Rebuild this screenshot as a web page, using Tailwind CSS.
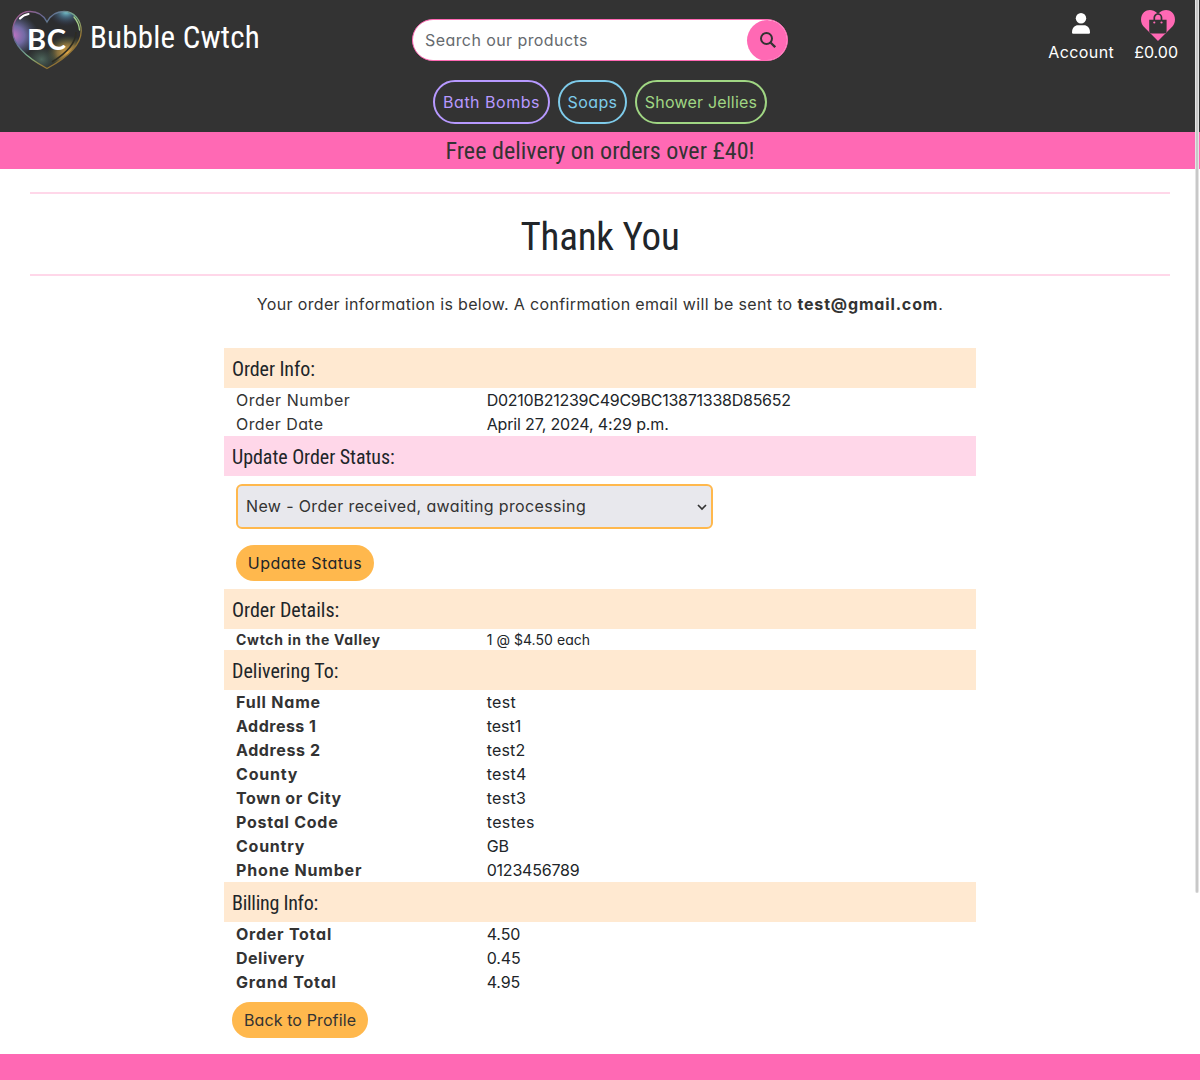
<!DOCTYPE html>
<html lang="en">
<head>
<meta charset="utf-8">
<title>Bubble Cwtch</title>
<script src="https://cdn.jsdelivr.net/npm/@tailwindcss/browser@4"></script>
</head>
<body class="relative h-[1080px] overflow-hidden bg-white font-['Inter',sans-serif] text-base leading-6 text-[#333] [font-feature-settings:'cv11']">
<header class="h-[132px] bg-[#333]">
  <div class="flex h-20 items-start">
    <div class="flex w-[412px] items-start pl-3 pt-[10px]">
      <svg class="h-[60px] w-[70px]" viewBox="0 0 70 60">
        <defs>
          <linearGradient id="rim" x1="0" y1="0" x2="1" y2="1">
            <stop offset="0" stop-color="#b0588e"/><stop offset=".3" stop-color="#5f6c94"/><stop offset=".52" stop-color="#7fb98c"/><stop offset=".7" stop-color="#9a7a36"/><stop offset="1" stop-color="#6b5732"/>
          </linearGradient>
          <radialGradient id="violet" cx="0" cy=".42" r=".38"><stop offset="0" stop-color="#c673c4"/><stop offset=".45" stop-color="#8a7fcb" stop-opacity=".75"/><stop offset="1" stop-color="#5a70a0" stop-opacity="0"/></radialGradient>
          <radialGradient id="teal" cx=".78" cy="0" r=".26"><stop offset="0" stop-color="#7fd6dc"/><stop offset=".4" stop-color="#4f7f9c" stop-opacity=".7"/><stop offset="1" stop-color="#335" stop-opacity="0"/></radialGradient>
          <radialGradient id="gold" cx=".8" cy=".72" r=".3"><stop offset="0" stop-color="#e0a544"/><stop offset=".5" stop-color="#a98a44" stop-opacity=".7"/><stop offset="1" stop-color="#556b3a" stop-opacity="0"/></radialGradient>
          <radialGradient id="green" cx=".42" cy=".84" r=".22"><stop offset="0" stop-color="#5d7f70" stop-opacity=".7"/><stop offset="1" stop-color="#4a6a5a" stop-opacity="0"/></radialGradient>
          <path id="heart" d="M35 12C31 4 25 1.5 18 1.5C8 1.5 .8 10 .8 21C.8 38 21 51 35 58.5C49 51 69.2 38 69.2 21C69.2 10 62 1.5 52 1.5C45 1.5 39 4 35 12Z"/>
        </defs>
        <use href="#heart" fill="#2c2d2f"/>
        <use href="#heart" fill="url(#violet)"/>
        <use href="#heart" fill="url(#teal)"/>
        <use href="#heart" fill="url(#gold)"/>
        <use href="#heart" fill="url(#green)"/>
        <use href="#heart" fill="none" stroke="url(#rim)" stroke-width="1.3"/>
        <path d="M64 22C64 34 53 44 40 52" fill="none" stroke="#2d2c22" stroke-width="1.6"/>
        <path d="M8 8.500Q11 5 16.500 4" fill="none" stroke="#fff" stroke-width="2.200" stroke-linecap="round"/>
        <path d="M62 7Q67 13 67.500 20" fill="none" stroke="#a5d08a" stroke-width="1.300" stroke-linecap="round"/>
        <text x="15" y="39.500" fill="#fff" font-family="Lato" font-weight="700" font-size="29" textLength="39">BC</text>
      </svg>
      <span class="ml-[8px] mt-[8px] font-['Roboto'] text-[31px] leading-10 tracking-[.2px] text-white [font-stretch:75%]">Bubble Cwtch</span>
    </div>
    <div class="mt-[19px] flex h-[42px] w-[376px] items-center justify-between overflow-hidden rounded-full border border-[#ff69b4] bg-white pl-3">
      <span class="tracking-[.42px] text-[#666a6e]">Search our products</span>
      <span class="-mr-px flex size-[41px] shrink-0 items-center justify-center rounded-full bg-[#ff69b4]">
        <svg class="size-4" viewBox="0 0 16 16" fill="none" stroke="#333" stroke-width="2"><circle cx="6.5" cy="6.5" r="5.5"/><path d="M10.5 10.5L15.2 15.2" stroke-width="2.3"/></svg>
      </span>
    </div>
    <div class="flex flex-1 justify-end gap-5 pr-[22px] pt-[9px] text-white">
      <div class="flex flex-col items-center">
        <svg class="h-8 w-5" viewBox="0 0 20 32" fill="#fff"><circle cx="10" cy="9.3" r="5.2"/><path d="M1 23.5C1 18.500 4 16.300 7 16.300H13C16 16.300 19 18.500 19 23.500Q19 24.800 17.800 24.800H2.200Q1 24.800 1 23.500Z"/></svg>
        <span class="-mt-px tracking-[.4px]">Account</span>
      </div>
      <div class="flex flex-col items-center">
        <svg class="ml-[3px] h-8 w-[34px]" viewBox="0 0 34 32"><path fill="#ff69b4" d="M17 32L2.600 17.500C-1 13.500-.8 6.500 3 3.200C7-.2 12.600.6 16 4.100L17 5.200L18 4.100C21.400.6 27-.2 31 3.200C34.800 6.500 35 13.500 31.400 17.500Z"/><path fill="none" stroke="#333" stroke-width="1.700" d="M13.300 11V8.600a3.600 3.600 0 0 1 7.200 0V11"/><path fill="#333" d="M8.200 10.700H25.600V22A2.500 2.500 0 0 1 23.100 24.500H10.700A2.500 2.500 0 0 1 8.200 22Z"/><g fill="#ff69b4"><circle cx="13.300" cy="13.500" r="1.100"/><circle cx="20.500" cy="13.500" r="1.100"/></g></svg>
        <span class="-mt-px">£0.00</span>
      </div>
    </div>
  </div>
  <nav class="flex justify-center gap-2">
    <a class="flex h-11 w-[117px] items-center justify-center rounded-full border-2 border-[#b799ff] tracking-[.5px] text-[#b799ff]">Bath Bombs</a>
    <a class="flex h-11 w-[69px] items-center justify-center rounded-full border-2 border-[#7ecbea] tracking-[.4px] text-[#7ecbea]">Soaps</a>
    <a class="flex h-11 w-[132px] items-center justify-center rounded-full border-2 border-[#a0d683] tracking-[.2px] text-[#a0d683]">Shower Jellies</a>
  </nav>
</header>
<div class="flex h-[37px] items-center justify-center bg-[#ff69b4] pt-px font-['Roboto'] text-2xl tracking-[.03px] [font-stretch:75%]">Free delivery on orders over £40!</div>
<main>
  <div class="mx-[30px] mt-[23px] flex h-[84px] items-center justify-center border-y-2 border-[#ffd7e9] pt-[5px] font-['Roboto'] text-[39px] tracking-[-.2px] text-[#212529] [font-stretch:75%]">Thank You</div>
  <p class="mt-4 text-center tracking-[.35px]">Your order information is below. A confirmation email will be sent to <strong class="tracking-[.85px]">test@gmail.com</strong>.</p>
  <div class="mx-auto mt-8 w-[752px] text-[#212529]">
    <h2 class="flex h-10 items-center bg-[#ffe9d1] px-2 pt-0.5 font-['Roboto'] text-xl tracking-[-.08px] [font-stretch:75%]">Order Info:</h2>
    <div class="grid grid-cols-3 [&>*]:pl-3"><span class="tracking-[.5px] text-[#333]">Order Number</span><span class="col-span-2 tracking-[-.25px]">D0210B21239C49C9BC13871338D85652</span>
      <span class="tracking-[.42px] text-[#333]">Order Date</span><span class="col-span-2 tracking-[-.15px]">April 27, 2024, 4:29 p.m.</span></div>
    <h2 class="flex h-10 items-center bg-[#ffd7e9] px-2 pt-0.5 font-['Roboto'] text-xl tracking-[-.05px] [font-stretch:75%]">Update Order Status:</h2>
    <div class="flex h-[113px] flex-col items-start gap-4 pl-3 pt-2 text-[#333]">
      <div class="flex h-[45px] w-[477px] items-center justify-between rounded-md border-2 border-[#ffb84d] bg-[#e8e8ed] pb-px pl-2 pr-1"><span class="tracking-[.36px]">New - Order received, awaiting processing</span><svg class="mt-px h-2 w-[10px]" viewBox="0 0 10 8" fill="none" stroke="#333" stroke-width="1.7"><path d="M1 2L5 6L9 2"/></svg></div>
      <div class="flex h-9 w-[138px] items-center justify-center rounded-full bg-[#ffb84d] tracking-[.45px] text-[#212529]">Update Status</div>
    </div>
    <h2 class="flex h-10 items-center bg-[#ffe9d1] px-2 pt-0.5 font-['Roboto'] text-xl [font-stretch:75%]">Order Details:</h2>
    <div class="grid grid-cols-3 text-sm leading-[21px] [&>*]:pl-3"><b class="tracking-[.7px] text-[#333]">Cwtch in the Valley</b><span class="col-span-2 tracking-[.05px]">1 @ $4.50 each</span></div>
    <h2 class="flex h-10 items-center bg-[#ffe9d1] px-2 pt-0.5 font-['Roboto'] text-xl [font-stretch:75%]">Delivering To:</h2>
    <div class="grid grid-cols-3 [&>*]:pl-3 [&>b]:text-[#333] [&>span]:col-span-2">
      <b class="tracking-[.8px]">Full Name</b><span class="tracking-[.35px]">test</span>
      <b class="tracking-[.5px]">Address 1</b><span>test1</span>
      <b class="tracking-[.6px]">Address 2</b><span class="tracking-[.2px]">test2</span>
      <b class="tracking-[.8px]">County</b><span class="tracking-[.35px]">test4</span>
      <b class="tracking-[.6px]">Town or City</b><span class="tracking-[.3px]">test3</span>
      <b class="tracking-[.75px]">Postal Code</b><span class="tracking-[.4px]">testes</span>
      <b class="tracking-[.75px]">Country</b><span>GB</span>
      <b class="tracking-[.83px]">Phone Number</b><span class="tracking-[-.2px]">0123456789</span>
    </div>
    <h2 class="flex h-10 items-center bg-[#ffe9d1] px-2 pt-0.5 font-['Roboto'] text-xl tracking-[-.25px] [font-stretch:75%]">Billing Info:</h2>
    <div class="grid grid-cols-3 [&>*]:pl-3 [&>b]:text-[#333] [&>span]:col-span-2 [&>span]:tracking-[-.1px]">
      <b class="tracking-[.75px]">Order Total</b><span>4.50</span>
      <b class="tracking-[.5px]">Delivery</b><span>0.45</span>
      <b class="tracking-[.85px]">Grand Total</b><span>4.95</span>
    </div>
    <div class="ml-2 mt-2 flex h-9 w-[136px] items-center justify-center rounded-full bg-[#ffb84d] tracking-[.12px] text-[#333]">Back to Profile</div>
  </div>
</main>
<footer class="mt-4 h-[26px] bg-[#ff69b4]"></footer>
<div class="absolute right-px top-0 h-[893px] w-1 rounded-b-full border-x border-white/50 bg-[#c8c8c8]"></div>
</body>
</html>
